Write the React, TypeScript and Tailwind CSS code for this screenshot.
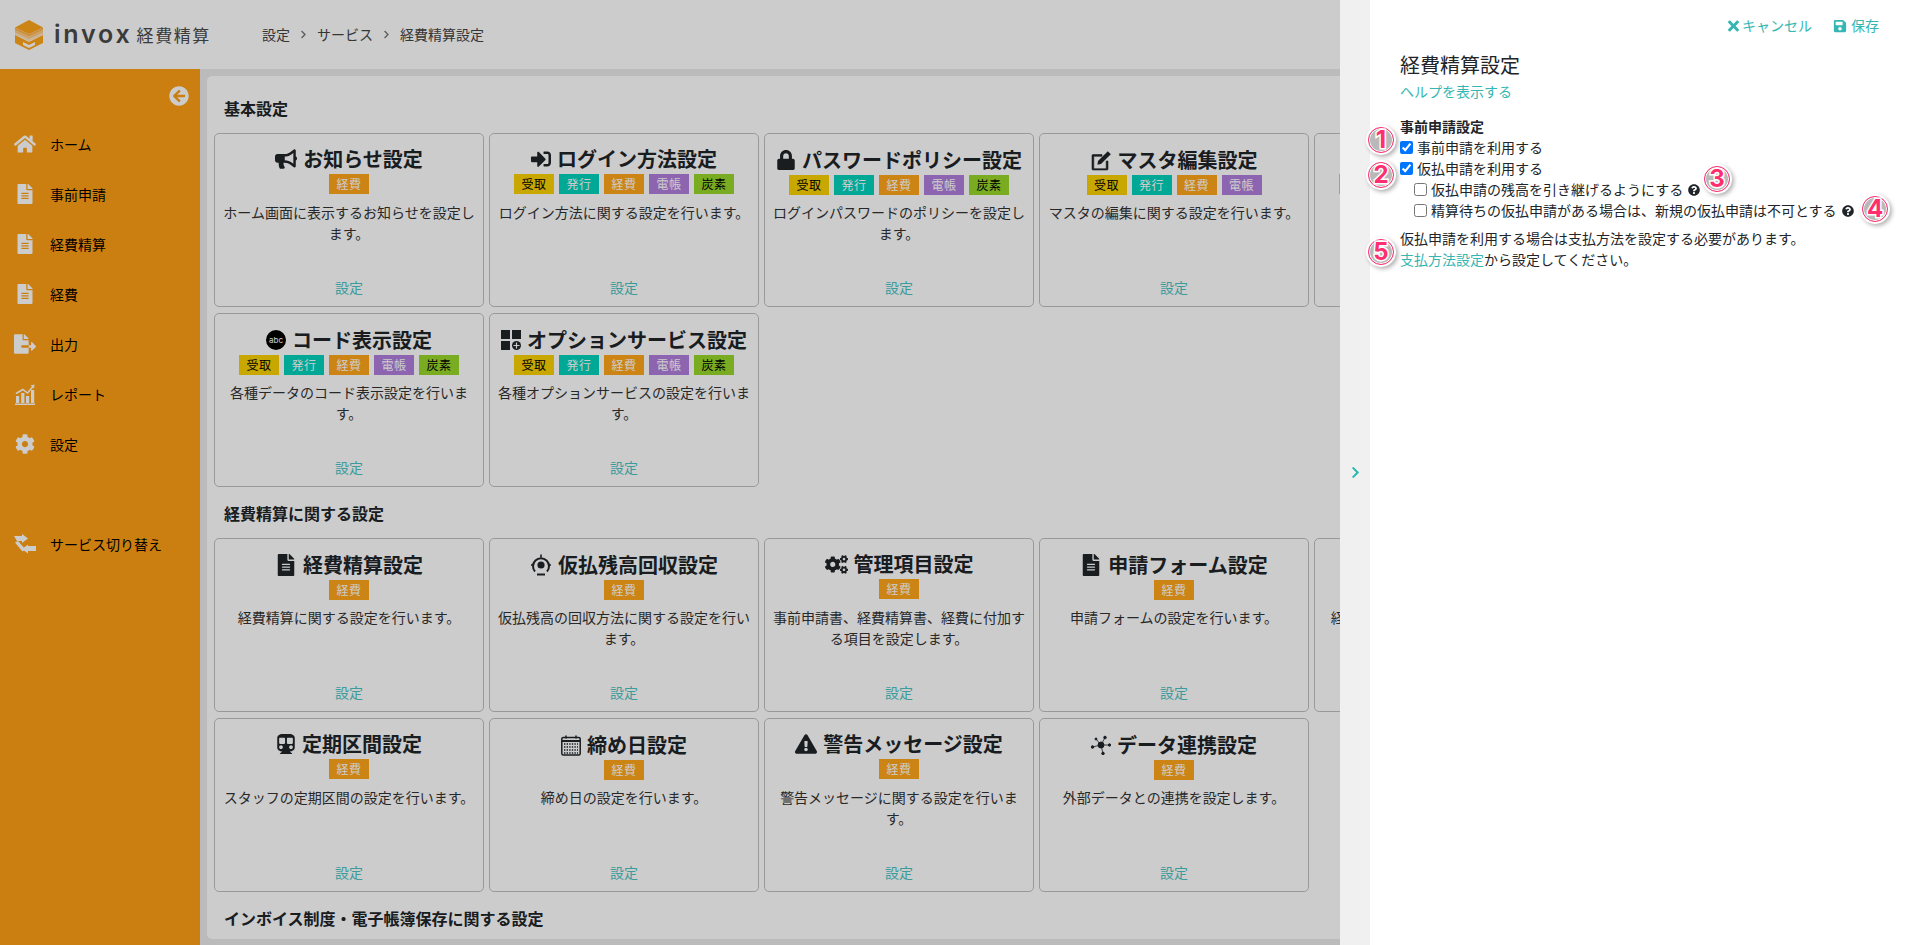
import type { ReactNode } from "react";
import {
  FaArrowCircleLeft,
  FaBullhorn,
  FaChevronRight,
  FaCog,
  FaCogs,
  FaExclamationTriangle,
  FaFileAlt,
  FaFileExport,
  FaHome,
  FaLock,
  FaQuestionCircle,
  FaSave,
  FaSignInAlt,
  FaSubway,
  FaTimes,
} from "react-icons/fa";

type TagKey = "receive" | "issue" | "expense" | "ledger" | "carbon";

const TAGS: Record<TagKey, { label: string; className: string }> = {
  receive: { label: "受取", className: "bg-[#fad200] text-black" },
  issue: { label: "発行", className: "bg-[#00d2bb] text-white" },
  expense: { label: "経費", className: "bg-[#ffa51a] text-white" },
  ledger: { label: "電帳", className: "bg-[#af7ddc] text-white" },
  carbon: { label: "炭素", className: "bg-[#98d728] text-black" },
};

const ALL_TAGS: TagKey[] = ["receive", "issue", "expense", "ledger", "carbon"];

function AbcIcon() {
  return (
    <span className="flex h-[20px] w-[20px] items-center justify-center rounded-full bg-black font-['Inter',sans-serif] text-[8px] leading-none font-normal text-white">
      abc
    </span>
  );
}

function OptionIcon() {
  return (
    <svg width="20" height="20" viewBox="0 0 20 20" fill="currentColor">
      <rect x="0" y="0" width="9" height="9" />
      <rect x="11" y="0" width="9" height="9" />
      <rect x="0" y="11" width="9" height="9" />
      <circle cx="15.5" cy="15.5" r="4.5" />
      <path d="M15.5 12.5v6M12.5 15.5h6" stroke="#fff" strokeWidth="1.2" />
    </svg>
  );
}

function CalendarIcon() {
  return (
    <svg width="20" height="21" viewBox="0 0 20 21" fill="none" stroke="currentColor">
      <rect x="0.8" y="2.5" width="18.4" height="17.5" rx="1.5" strokeWidth="1.5" />
      <path d="M1 6h18" strokeWidth="2" />
      <path d="M5 0.5v3M15 0.5v3" strokeWidth="1.5" />
      <path d="M3 9h14M3 12h14M3 15h14M3 18h14" strokeWidth="1.4" strokeDasharray="1.4 1.2" />
    </svg>
  );
}

function DataLinkIcon() {
  return (
    <svg width="20" height="20" viewBox="0 0 20 20" fill="currentColor" stroke="currentColor">
      <circle cx="10" cy="10" r="3" />
      <path d="M10 10L14 2.5M10 10L18.5 10M10 10L12 18.5M10 10L1.5 12M10 10L5 4" strokeWidth="0.8" />
      <circle cx="14" cy="2.5" r="1.3" />
      <circle cx="18.5" cy="10" r="1.2" />
      <circle cx="12" cy="18.5" r="1.3" />
      <circle cx="1.5" cy="12" r="1.3" />
      <circle cx="5" cy="4" r="1" />
    </svg>
  );
}

function EditIcon() {
  return (
    <svg width="21" height="21" viewBox="0 0 21 21" fill="currentColor">
      <path
        d="M1 5.5a1 1 0 0 1 1-1h9v1.8H2.8v12.4h12.4V11H17v8a1 1 0 0 1-1 1H2a1 1 0 0 1-1-1z"
        stroke="currentColor"
        strokeWidth="0.6"
      />
      <path d="M16.8 1.2l3 3L10 14l-3.6.7.6-3.6z" />
    </svg>
  );
}

function RecoverIcon() {
  return (
    <svg width="22" height="22" viewBox="0 0 22 22" fill="none" stroke="currentColor">
      <path d="M5 17.5A8 8 0 1 1 17 17.5" strokeWidth="2" />
      <circle cx="11" cy="11" r="3.6" fill="currentColor" stroke="none" />
      <path d="M7 20.5h8" strokeWidth="2" />
      <path d="M11 0.5v3M1 11h3M18 11h3" strokeWidth="1.6" />
    </svg>
  );
}

function ReportIcon() {
  return (
    <svg width="20" height="21" viewBox="0 0 20 21" fill="currentColor">
      <rect x="1" y="12" width="3.2" height="7" />
      <rect x="6.2" y="9" width="3.2" height="10" />
      <rect x="11" y="12" width="3.2" height="7" />
      <rect x="16" y="6" width="3.2" height="13" />
      <rect x="0" y="19.5" width="20" height="1.5" />
      <path d="M1 9.5L7.8 5.5L12.5 9L18 2.5" fill="none" stroke="currentColor" strokeWidth="1.5" />
      <path d="M15.5 1.5L19.5 0.5L19 4.5Z" />
    </svg>
  );
}

function SwitchIcon() {
  return (
    <svg width="22" height="21" viewBox="0 0 22 21" fill="currentColor">
      <path d="M0 2h8V0l6 4.5L8 9V7H3z" />
      <path d="M22 12v5h-8v2.5L8 15l6-4.5V12z" />
      <path d="M1 8.5L4 7l7.5 8.5-3 2z" />
    </svg>
  );
}

function LogoMark() {
  return (
    <svg width="30" height="30" viewBox="0 0 30 30" className="shrink-0">
      <path d="M1 15v8l14 7 14-7v-8l-14 7z" fill="#ffa51a" />
      <path d="M9 22l6 3 6-3v3l-6 3-6-3z" fill="#fff" />
      <path d="M1 12.5L15 19l14-6.5V15l-14 6.5L1 15z" fill="#ffe0b8" />
      <path d="M1 10L15 16.5 29 10v2.5L15 19 1 12.5z" fill="#ffc880" />
      <path d="M15 0l14 7.5L15 14 1 7.5z" fill="#ffa51a" />
      <path d="M1 7.5L15 14l14-6.5V10l-14 6.5L1 10z" fill="#ffb54a" />
    </svg>
  );
}

type CardData = {
  icon?: ReactNode;
  title?: string;
  tags: TagKey[];
  text?: string;
  lowTags?: boolean;
};

const ROW_ONE: CardData[] = [
  { icon: <FaBullhorn size={22} />, title: "お知らせ設定", tags: ["expense"], text: "ホーム画面に表示するお知らせを設定します。" },
  { icon: <FaSignInAlt size={20} />, title: "ログイン方法設定", tags: ALL_TAGS, text: "ログイン方法に関する設定を行います。" },
  { icon: <FaLock size={20} />, title: "パスワードポリシー設定", tags: ALL_TAGS, text: "ログインパスワードのポリシーを設定します。", lowTags: true },
  { icon: <EditIcon />, title: "マスタ編集設定", tags: ["receive", "issue", "expense", "ledger"], text: "マスタの編集に関する設定を行います。", lowTags: true },
  { tags: ALL_TAGS },
  { icon: <AbcIcon />, title: "コード表示設定", tags: ALL_TAGS, text: "各種データのコード表示設定を行います。", lowTags: true },
  { icon: <OptionIcon />, title: "オプションサービス設定", tags: ALL_TAGS, text: "各種オプションサービスの設定を行います。", lowTags: true },
];

const ROW_TWO: CardData[] = [
  { icon: <FaFileAlt size={22} />, title: "経費精算設定", tags: ["expense"], text: "経費精算に関する設定を行います。", lowTags: true },
  { icon: <RecoverIcon />, title: "仮払残高回収設定", tags: ["expense"], text: "仮払残高の回収方法に関する設定を行います。", lowTags: true },
  { icon: <FaCogs size={23} />, title: "管理項目設定", tags: ["expense"], text: "事前申請書、経費精算書、経費に付加する項目を設定します。" },
  { icon: <FaFileAlt size={22} />, title: "申請フォーム設定", tags: ["expense"], text: "申請フォームの設定を行います。", lowTags: true },
  { tags: ["expense"], text: "経費の入力に関する設定を行います。" },
  { icon: <FaSubway size={20} />, title: "定期区間設定", tags: ["expense"], text: "スタッフの定期区間の設定を行います。" },
  { icon: <CalendarIcon />, title: "締め日設定", tags: ["expense"], text: "締め日の設定を行います。", lowTags: true },
  { icon: <FaExclamationTriangle size={22} />, title: "警告メッセージ設定", tags: ["expense"], text: "警告メッセージに関する設定を行います。" },
  { icon: <DataLinkIcon />, title: "データ連携設定", tags: ["expense"], text: "外部データとの連携を設定します。", lowTags: true },
];

function Card({ card }: { card: CardData }) {
  return (
    <div className="flex h-[174px] flex-col rounded-[5px] border border-[#c0c0c0] px-[5px] text-center">
      <div className="h-[68px] shrink-0">
        <div
          className={`flex items-end justify-center gap-[6px] pb-[2px] text-[20px] leading-[27px] font-bold whitespace-nowrap text-[#212529] ${
            card.lowTags ? "h-[41px]" : "h-[40px]"
          }`}
        >
          {card.title && <span className="flex h-[26px] items-center">{card.icon}</span>}
          <span>{card.title}</span>
        </div>
        <div className="flex justify-center gap-[5px]">
          {card.tags.map((key) => (
            <span
              key={key}
              className={`h-[20px] w-[40px] text-center text-[12px] leading-[20px] tracking-[0.5px] ${TAGS[key].className}`}
            >
              {TAGS[key].label}
            </span>
          ))}
        </div>
      </div>
      <p className="flex-1 text-[14px] leading-[21px] text-[#333]">{card.text}</p>
      <a className="mb-[8px] text-[14px] leading-[21px] text-[#4cc3c3]">設定</a>
    </div>
  );
}

function SectionTitle({ children }: { children: ReactNode }) {
  return (
    <h2 className="mt-[2px] mb-[1px] flex h-[48px] items-center pl-[10px] text-[16px] font-bold text-[#212529]">
      {children}
    </h2>
  );
}

const NAV: { icon: ReactNode; label: string }[] = [
  { icon: <FaHome size={22} />, label: "ホーム" },
  { icon: <FaFileAlt size={20} />, label: "事前申請" },
  { icon: <FaFileAlt size={20} />, label: "経費精算" },
  { icon: <FaFileAlt size={20} />, label: "経費" },
  { icon: <FaFileExport size={22} />, label: "出力" },
  { icon: <ReportIcon />, label: "レポート" },
  { icon: <FaCog size={20} />, label: "設定" },
];

function NavItem({ icon, label }: { icon: ReactNode; label: string }) {
  return (
    <div className="flex h-[50px] items-center text-[14px] text-black">
      <span className="flex w-[50px] justify-center text-white">{icon}</span>
      {label}
    </div>
  );
}

function Marker({ n, className }: { n: string; className: string }) {
  return (
    <div
      className={`absolute z-30 flex h-[26px] w-[26px] items-center justify-center rounded-full border-[1.5px] border-[#ff2e6e] bg-[#b9b9b9] font-['Inter',sans-serif] text-[24px] leading-none font-bold text-[#ff2e6e] shadow-[inset_0_0_0_1px_#fff,0_0_0_2px_#fff,2px_2px_4px_2px_rgba(0,0,0,0.3)] [-webkit-text-stroke:3px_#fff] [paint-order:stroke_fill] ${className}`}
    >
      {n}
    </div>
  );
}

function CheckRow({
  label,
  checked,
  nested,
  help,
}: {
  label: string;
  checked?: boolean;
  nested?: boolean;
  help?: boolean;
}) {
  return (
    <label className={`flex h-[21px] items-center text-[14px] ${nested ? "pl-[14px]" : ""}`}>
      <input type="checkbox" defaultChecked={checked} className="m-0 mr-[4px] h-[13px] w-[13px]" />
      {label}
      {help && <FaQuestionCircle size={12} className="ml-[5px] text-[#212529]" />}
    </label>
  );
}

export default function App() {
  return (
    <div className="relative flex h-screen w-screen flex-col overflow-hidden bg-white font-['Noto_Sans_CJK_JP','Noto_Sans',sans-serif] text-[#212529]">
      <header className="flex h-[69px] shrink-0 items-center bg-white pl-[14px]">
        <div className="flex w-[248px] shrink-0 items-center">
          <LogoMark />
          <span className="ml-[10px] font-['Inter',sans-serif] text-[25px] leading-none font-semibold tracking-[2.8px] text-[#4a4a4a]">
            invox
          </span>
          <span className="ml-[4px] text-[17px] tracking-[1.6px] text-[#4a4a4a]">経費精算</span>
        </div>
        <nav className="flex items-center gap-[9px] text-[14px] text-[#444]">
          <span>設定</span>
          <FaChevronRight size={9} className="text-[#777]" />
          <span>サービス</span>
          <FaChevronRight size={9} className="text-[#777]" />
          <span>経費精算設定</span>
        </nav>
      </header>

      <div className="flex min-h-0 flex-1">
        <aside className="w-[200px] shrink-0 bg-[#fe9f15]">
          <div className="flex h-[50px] justify-end pt-[17px] pr-[11px] text-white">
            <FaArrowCircleLeft size={20} />
          </div>
          {NAV.map((item) => (
            <NavItem key={item.label} icon={item.icon} label={item.label} />
          ))}
          <div className="h-[50px]" />
          <NavItem icon={<SwitchIcon />} label="サービス切り替え" />
        </aside>

        <main className="min-w-0 flex-1 bg-[#eaeaea] pt-[7px] pb-[6px] pl-[7px]">
          <div className="h-full overflow-hidden rounded-l-[5px] bg-white pt-[6px] pl-[7px]">
            <SectionTitle>基本設定</SectionTitle>
            <div className="grid w-[1370px] grid-cols-[repeat(5,270px)] gap-x-[5px] gap-y-[6px]">
              {ROW_ONE.map((card, i) => (
                <Card key={i} card={card} />
              ))}
            </div>
            <SectionTitle>経費精算に関する設定</SectionTitle>
            <div className="grid w-[1370px] grid-cols-[repeat(5,270px)] gap-x-[5px] gap-y-[6px]">
              {ROW_TWO.map((card, i) => (
                <Card key={i} card={card} />
              ))}
            </div>
            <SectionTitle>インボイス制度・電子帳簿保存に関する設定</SectionTitle>
          </div>
        </main>
      </div>

      {/* dim layer behind the settings drawer */}
      <div className="absolute inset-0 z-10 bg-black/20" />

      <section className="absolute top-0 right-0 bottom-0 z-20 flex w-[580px] bg-white">
        <div className="flex w-[30px] shrink-0 items-center justify-center bg-[#f0f0f0] text-[#2bb7b3]">
          <FaChevronRight size={13} />
        </div>
        <div className="flex-1 pl-[30px] text-[14px] leading-[21px]">
          <div className="flex justify-end gap-[21px] pt-[15px] pr-[41px] text-[#34b6b2]">
            <span className="flex items-center gap-[3px]">
              <FaTimes size={16} className="w-[11px]" />
              キャンセル
            </span>
            <span className="flex items-center gap-[4px]">
              <FaSave size={14} />
              保存
            </span>
          </div>
          <h1 className="mt-[14px] text-[20px] leading-[30px] font-normal">経費精算設定</h1>
          <a className="mt-[1px] block text-[#34b6b2]">ヘルプを表示する</a>
          <h3 className="mt-[14px] font-bold">事前申請設定</h3>
          <CheckRow label="事前申請を利用する" checked />
          <CheckRow label="仮払申請を利用する" checked />
          <CheckRow nested help label="仮払申請の残高を引き継げるようにする" />
          <CheckRow nested help label="精算待ちの仮払申請がある場合は、新規の仮払申請は不可とする" />
          <p className="mt-[7px]">仮払申請を利用する場合は支払方法を設定する必要があります。</p>
          <p>
            <a className="text-[#34b6b2]">支払方法設定</a>から設定してください。
          </p>
        </div>
      </section>

      <Marker n="1" className="top-[127px] left-[1368px]" />
      <Marker n="2" className="top-[162px] left-[1368px]" />
      <Marker n="3" className="top-[166px] left-[1704px]" />
      <Marker n="4" className="top-[196px] left-[1862px]" />
      <Marker n="5" className="top-[239px] left-[1368px]" />
    </div>
  );
}
